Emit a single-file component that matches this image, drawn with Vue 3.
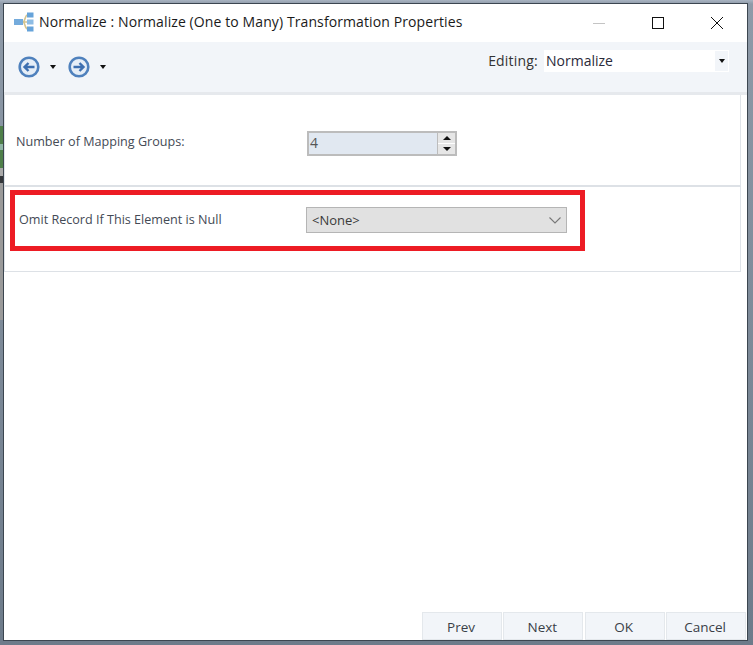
<script setup>
const footerButtons = ['Prev', 'Next', 'OK', 'Cancel']
</script>

<template>
  <div class="desktop">
    <div class="strip"></div>
    <div class="window">
      <header class="titlebar">
        <svg class="app-icon" width="20" height="20" viewBox="0 0 20 20">
          <path d="M9 10 C11 10 11 3 13.5 3 M9 10 H13.5 M9 10 C11 10 11 17 13.5 17" stroke="#d3c48f" stroke-width="1.6" fill="none" />
          <rect x="0" y="7" width="9" height="6" fill="#74abdc" />
          <rect x="13" y="0.5" width="6.5" height="5" fill="#66a3da" />
          <rect x="13" y="7.5" width="6.5" height="5" fill="#8dbce4" />
          <rect x="13" y="14.5" width="6.5" height="5" fill="#66a3da" />
        </svg>
        <span class="title">Normalize : Normalize (One to Many) Transformation Properties</span>
        <div class="winbtns">
          <svg width="14" height="14" viewBox="0 0 14 14"><path d="M1 7.5H13" stroke="#c4c4c4" /></svg>
          <svg width="14" height="14" viewBox="0 0 14 14"><rect x="1.5" y="1.5" width="11" height="11" fill="none" stroke="#111" /></svg>
          <svg width="14" height="14" viewBox="0 0 14 14"><path d="M1 1L13 13M13 1L1 13" stroke="#111" fill="none" /></svg>
        </div>
      </header>

      <div class="toolbar">
        <div class="nav">
          <svg class="circle" width="22" height="22" viewBox="0 0 22 22">
            <circle cx="11" cy="11" r="9.3" fill="#e6eef7" stroke="#4f81bd" stroke-width="2.6" />
            <path d="M16.5 11H6.5M10.5 7L6.5 11L10.5 15" fill="none" stroke="#3d6fb0" stroke-width="2.4" />
          </svg>
          <span class="caret nav-caret"></span>
          <svg class="circle" width="22" height="22" viewBox="0 0 22 22">
            <circle cx="11" cy="11" r="9.3" fill="#e6eef7" stroke="#4f81bd" stroke-width="2.6" />
            <path d="M5.5 11H15.5M11.5 7L15.5 11L11.5 15" fill="none" stroke="#3d6fb0" stroke-width="2.4" />
          </svg>
          <span class="caret nav-caret"></span>
        </div>
        <div class="editing">
          <span class="editing-label">Editing:</span>
          <div class="editing-select">
            <span>Normalize</span>
            <span class="editing-arrow"><span class="caret"></span></span>
          </div>
        </div>
      </div>

      <div class="content">
        <section class="panel panel-one">
          <label class="field-label">Number of Mapping Groups:</label>
          <div class="spinner">
            <span class="spinner-value">4</span>
            <div class="spinner-btns">
              <span class="spin"><span class="caret up"></span></span>
              <span class="spin"><span class="caret"></span></span>
            </div>
          </div>
        </section>
        <section class="panel panel-two">
          <label class="field-label omit">Omit Record If This Element is Null</label>
          <div class="combo">
            <span>&lt;None&gt;</span>
            <svg width="12" height="7" viewBox="0 0 12 7"><path d="M0.5 0.5L6 6L11.5 0.5" fill="none" stroke="#777" stroke-width="1.1" /></svg>
          </div>
          <div class="highlight"></div>
        </section>
      </div>

      <footer class="footer">
        <button v-for="b in footerButtons" :key="b" class="fbtn">{{ b }}</button>
      </footer>
    </div>
  </div>
</template>

<style scoped>
.desktop {
  width: 753px;
  height: 645px;
  display: flex;
  padding: 3px 5px 4px 3px;
  box-sizing: border-box;
  position: relative;
  overflow: hidden;
  font-family: "Open Sans", "Noto Sans", sans-serif;
  background: linear-gradient(#a9b4c2 0, #8e9aa8 4px, #6d7b8a 100%);
}
.strip {
  position: absolute;
  left: 0;
  top: 126px;
  width: 3px;
  height: 194px;
  background: linear-gradient(
    #4f7f4a 0,
    #4f7f4a 18px,
    #8fb5a5 18px,
    #8fb5a5 24px,
    #4f7f4a 24px,
    #4f7f4a 42px,
    #a9a9a9 42px,
    #a9a9a9 50px,
    #33363a 50px,
    #33363a 57px,
    #9a9a9a 57px,
    #9a9a9a 100%
  );
}
.window {
  flex: 1;
  border: 1px solid #3c4650;
  background: #fff;
  display: flex;
  flex-direction: column;
  position: relative;
}
.titlebar {
  height: 38px;
  display: flex;
  align-items: center;
  padding-left: 10px;
  flex: none;
}
.app-icon { margin: 0 5px 3px 0; }
.title {
  font-size: 14px;
  color: #1a1a1a;
  white-space: nowrap;
  letter-spacing: 0.1px;
  margin-bottom: 3px;
}
.winbtns {
  margin-left: auto;
  display: flex;
  gap: 45px;
  align-items: center;
  padding-right: 23px;
}
.toolbar {
  height: 50px;
  flex: none;
  background: #f2f5f9;
  display: flex;
  justify-content: space-between;
  padding: 0 18px 0 14px;
  box-sizing: border-box;
}
.nav {
  display: flex;
  align-items: center;
  height: 50px;
}
.circle { flex: none; }
.nav-caret { margin: 0 12px 0 10px; }
.caret {
  display: inline-block;
  width: 0;
  height: 0;
  border-left: 3.5px solid transparent;
  border-right: 3.5px solid transparent;
  border-top: 4px solid #111;
}
.caret.up {
  border-top: none;
  border-bottom: 4px solid #111;
}
.editing {
  display: flex;
  align-items: center;
  height: 37px;
  font-size: 14px;
}
.editing-label { color: #333; margin-right: 6px; letter-spacing: 0.2px; }
.editing-select {
  width: 185px;
  height: 22px;
  background: #fff;
  display: flex;
  align-items: center;
  justify-content: space-between;
  padding-left: 2px;
  box-sizing: border-box;
  color: #2a2a3a;
}
.editing-arrow {
  width: 13px;
  height: 20px;
  margin-right: 1px;
  background: #f2f5f9;
  display: flex;
  align-items: center;
  justify-content: center;
}
.content {
  flex: 1;
  border-top: 3px solid #e6e9ed;
  min-height: 0;
}
.panel {
  width: 735px;
  border-right: 1px solid #e0e4e9;
  border-left: 1px solid #e0e4e9;
  display: flex;
  align-items: flex-start;
  position: relative;
  font-size: 12.6px;
  color: #444a55;
}
.panel-one {
  height: 90px;
  border-bottom: 2px solid #dde1e6;
}
.panel-two {
  height: 84px;
  border-bottom: 1px solid #dde1e6;
}
.field-label { white-space: nowrap; }
.panel-one .field-label { margin: 38px 0 0 11px; width: 291px; }
.omit { margin: 24px 0 0 14px; width: 287px; }
.spinner {
  margin-top: 36px;
  width: 150px;
  height: 25px;
  box-sizing: border-box;
  border: 2px solid #bcbcbc;
  background: #e1e8f1;
  display: flex;
  justify-content: space-between;
  align-items: center;
  font-size: 14px;
  color: #555;
}
.spinner-value { padding-left: 1px; margin-bottom: 3px; }
.spinner-btns {
  width: 17px;
  height: 21px;
  display: flex;
  flex-direction: column;
  gap: 1px;
  background: #fff;
  border-left: 1px solid #bcbcbc;
}
.spin {
  flex: 1;
  background: #e6e6e6;
  display: flex;
  align-items: center;
  justify-content: center;
}
.spin .caret {
  border-left-width: 4px;
  border-right-width: 4px;
}
.combo {
  margin-top: 20px;
  width: 261px;
  height: 26px;
  box-sizing: border-box;
  border: 1px solid #b5b5b5;
  background: #e1e1e1;
  display: flex;
  align-items: center;
  justify-content: space-between;
  padding: 0 5px 0 5px;
  font-size: 13px;
  color: #3a3a3a;
}
.highlight {
  position: absolute;
  left: 5px;
  top: 3px;
  width: 565px;
  height: 51px;
  border: 5px solid #ed1c24;
  pointer-events: none;
}
.footer {
  margin-top: auto;
  display: flex;
  justify-content: flex-end;
  gap: 1.33px;
  height: 28px;
  flex: none;
  padding-right: 1px;
}
.fbtn {
  width: 80px;
  height: 28px;
  background: #f2f5f9;
  border: 1px solid #e4e8ec;
  font-family: inherit;
  font-size: 13.5px;
  color: #3a3f48;
  padding: 1px 2px 0 0;
}
</style>
